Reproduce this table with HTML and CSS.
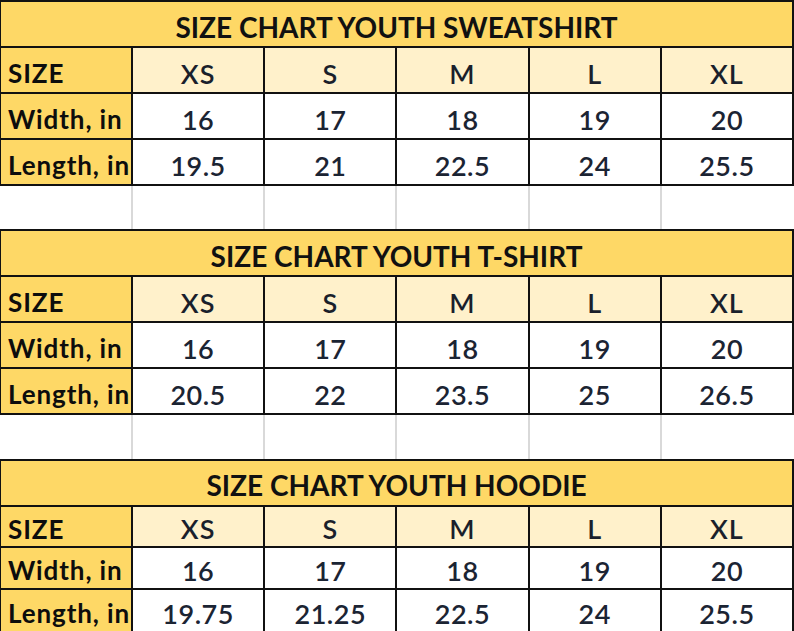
FILE: index.html
```html
<!DOCTYPE html>
<html>
<head>
<meta charset="utf-8">
<link rel="stylesheet" href="styles.css">
</head>
<body>
<div class="sheet">
  <div class="chart">
    <div class="title">SIZE CHART YOUTH SWEATSHIRT</div>
    <div class="label">SIZE</div>
    <div class="head">XS</div><div class="head">S</div><div class="head">M</div><div class="head">L</div><div class="head">XL</div>
    <div class="label">Width, in</div>
    <div class="val">16</div><div class="val">17</div><div class="val">18</div><div class="val">19</div><div class="val">20</div>
    <div class="label">Length, in</div>
    <div class="val">19.5</div><div class="val">21</div><div class="val">22.5</div><div class="val">24</div><div class="val">25.5</div>
  </div>
  <div class="blank blank-short"><div></div><div></div><div></div><div></div><div></div><div></div></div>
  <div class="chart">
    <div class="title">SIZE CHART YOUTH T-SHIRT</div>
    <div class="label">SIZE</div>
    <div class="head">XS</div><div class="head">S</div><div class="head">M</div><div class="head">L</div><div class="head">XL</div>
    <div class="label">Width, in</div>
    <div class="val">16</div><div class="val">17</div><div class="val">18</div><div class="val">19</div><div class="val">20</div>
    <div class="label">Length, in</div>
    <div class="val">20.5</div><div class="val">22</div><div class="val">23.5</div><div class="val">25</div><div class="val">26.5</div>
  </div>
  <div class="blank"><div></div><div></div><div></div><div></div><div></div><div></div></div>
  <div class="chart chart-compact">
    <div class="title">SIZE CHART YOUTH HOODIE</div>
    <div class="label">SIZE</div>
    <div class="head">XS</div><div class="head">S</div><div class="head">M</div><div class="head">L</div><div class="head">XL</div>
    <div class="label">Width, in</div>
    <div class="val">16</div><div class="val">17</div><div class="val">18</div><div class="val">19</div><div class="val">20</div>
    <div class="label">Length, in</div>
    <div class="val">19.75</div><div class="val">21.25</div><div class="val">22.5</div><div class="val">24</div><div class="val">25.5</div>
  </div>
</div>
</body>
</html>
```
FILE: styles.css
```css
html, body {
  margin: 0;
  padding: 0;
  background: #ffffff;
}
.sheet {
  width: 794px;
  height: 631px;
  overflow: hidden;
  font-family: Lato, "Noto Sans", sans-serif;
}
.chart {
  display: grid;
  grid-template-columns: 130px repeat(5, 1fr);
  grid-template-rows: 44px 44px 44px 44px;
  gap: 2px;
  background: #111111;
  border-top: 2px solid #111111;
  border-bottom: 2px solid #111111;
  border-left: 1px solid #111111;
  border-right: 2px solid #111111;
}
.chart-compact {
  grid-template-rows: 44px 39px 40px 42px;
}
.chart > div {
  display: flex;
  align-items: center;
  justify-content: center;
  padding-top: 6px;
  box-sizing: border-box;
}
.chart-compact > div {
  padding-top: 4px;
}
.title {
  grid-column: 1 / -1;
  background: #fed866;
  color: #111111;
  font-weight: 700;
  font-size: 28px;
}
.chart > .label {
  justify-content: flex-start;
  padding-left: 7px;
  background: #fed866;
  color: #0d0d0d;
  font-weight: 700;
  font-size: 26px;
  letter-spacing: 0.9px;
  white-space: nowrap;
}
.head {
  background: #fff1cb;
  color: #1a1f2b;
  font-weight: 600;
  font-size: 27px;
  letter-spacing: 1px;
}
.val {
  background: #ffffff;
  color: #1b2433;
  font-weight: 600;
  font-size: 27px;
  letter-spacing: 0.5px;
}
.blank {
  display: grid;
  grid-template-columns: 130px repeat(5, 1fr);
  gap: 2px;
  height: 44px;
  background: #d9d9d9;
  border-left: 1px solid #ffffff;
  border-right: 2px solid #ffffff;
}
.blank-short {
  height: 43px;
}
.blank > div {
  background: #ffffff;
}
```
